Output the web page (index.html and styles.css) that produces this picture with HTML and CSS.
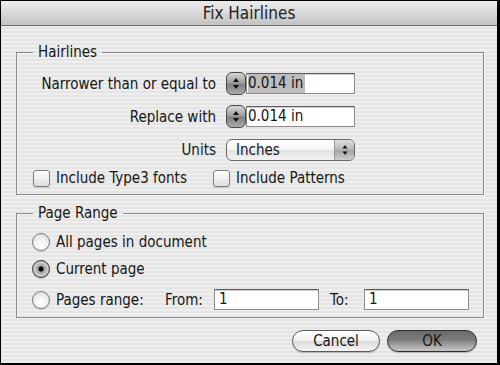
FILE: index.html
```html
<!DOCTYPE html>
<html lang="en">
<head>
<meta charset="UTF-8" />
<title>Fix Hairlines</title>
<link rel="stylesheet" href="styles.css">
</head>
<body>
    <div class="window">
        <div class="titlebar">Fix Hairlines</div>

        <div class="sheet">
            <fieldset class="group group-hairlines">
                <legend>Hairlines</legend>

                <div class="row">
                    <span class="row-label">Narrower than or equal to</span>
                    <span class="stepper">
                        <svg width="20" height="23" viewBox="0 0 20 23"><path d="M7 10 L10 6 L13 10 Z M7 13 L10 17 L13 13 Z" fill="#111"/></svg>
                    </span>
                    <span class="field field-num"><span class="selection">0.014 in</span></span>
                </div>

                <div class="row row-replace">
                    <span class="row-label">Replace with</span>
                    <span class="stepper">
                        <svg width="20" height="23" viewBox="0 0 20 23"><path d="M7 10 L10 6 L13 10 Z M7 13 L10 17 L13 13 Z" fill="#111"/></svg>
                    </span>
                    <span class="field field-num">0.014 in</span>
                </div>

                <div class="row row-units">
                    <span class="row-label">Units</span>
                    <span class="popup">
                        <span class="popup-text">Inches</span>
                        <span class="popup-arrows">
                            <svg width="20" height="20" viewBox="0 0 20 20"><path d="M7.5 8.5 L10 5 L12.5 8.5 Z M7.5 11.5 L10 15 L12.5 11.5 Z" fill="#111"/></svg>
                        </span>
                    </span>
                </div>

                <div class="checks">
                    <span class="check check-first"><span class="box"></span>Include Type3 fonts</span>
                    <span class="check"><span class="box"></span>Include Patterns</span>
                </div>
            </fieldset>

            <fieldset class="group group-range">
                <legend>Page Range</legend>

                <div class="radio-row"><span class="radio"></span>All pages in document</div>
                <div class="radio-row radio-row-2"><span class="radio radio-on"></span>Current page</div>
                <div class="radio-row radio-row-3">
                    <span class="radio"></span>
                    <span class="range-label">Pages range:</span>
                    <span class="from-label">From:</span>
                    <span class="field field-page">1</span>
                    <span class="to-label">To:</span>
                    <span class="field field-page">1</span>
                </div>
            </fieldset>

            <div class="buttons">
                <span class="button">Cancel</span>
                <span class="button button-default">OK</span>
            </div>
        </div>
    </div>
</body>
</html>
```

FILE: styles.css
```css
* {
    margin:0px;
    padding:0px;
    box-sizing:border-box;
}

body {
    font-family:'DejaVu Sans Condensed', 'Liberation Sans', Arial, sans-serif;
    font-size:15px;
    line-height:18px;
    color:#151515;
    background-color:#000;
}

.window {
    width:500px;
    height:365px;
    border-style:solid;
    border-color:#000;
    border-width:1px 3px 2px 1px;
    background:repeating-linear-gradient(to bottom, #eeeeee 0px, #eeeeee 2px, #e5e5e5 2px, #e5e5e5 4px);
    overflow:hidden;
}

.titlebar {
    height:25px;
    border-bottom:1px solid #6e6e6e;
    font-size:17px;
    line-height:24px;
    text-align:center;
    color:#222;
    background:linear-gradient(to bottom, #ececec 0%, #d9d9d9 50%, #c2c2c2 100%);
}

.sheet {
    padding:17px 13px 0px 15px;
}

/* group boxes */
.group {
    border:1px solid #8a8a8a;
    box-shadow:inset 1px 1px 0px #f6f6f6, 1px 1px 0px #f6f6f6;
}

.group legend {
    margin-left:16px;
    padding:0px 5px;
    line-height:18px;
}

.group-hairlines {
    padding:11px 0px 7px 0px;
}

.group-range {
    margin-top:9px;
    padding:11px 0px 7px 0px;
}

/* label + control rows */
.row {
    display:flex;
    align-items:center;
    height:23px;
}

.row-replace {
    margin-top:10px;
}

.row-units {
    margin-top:11px;
    height:22px;
}

.row-label {
    width:199px;
    margin-right:10px;
    text-align:right;
}

.stepper {
    display:block;
    width:20px;
    height:23px;
    border:1px solid #4a4a4a;
    border-radius:6px;
    background:linear-gradient(to bottom, #d6d6d6 0%, #a0a0a0 45%, #808080 55%, #ababab 100%);
}

.stepper svg {
    display:block;
    margin:-1px 0px 0px -1px;
}

.field {
    display:block;
    height:21px;
    padding:0px 3px;
    border:1px solid #8c8c8c;
    border-top-color:#5c5c5c;
    line-height:19px;
    background-color:#fff;
    box-shadow:inset 0px 1px 0px #cfcfcf;
}

.field-num {
    width:109px;
    padding-left:1px;
}

.selection {
    display:inline-block;
    padding-right:2px;
    background-color:#bdbdbd;
}

.popup {
    display:flex;
    width:129px;
    height:22px;
    border:1px solid #6a6a6a;
    border-radius:6px;
    background:linear-gradient(to bottom, #ffffff 0%, #f4f4f4 50%, #e2e2e2 51%, #f2f2f2 100%);
    overflow:hidden;
}

.popup-text {
    flex:1;
    padding-left:9px;
    line-height:20px;
}

.popup-arrows {
    display:block;
    width:20px;
    border-left:1px solid #9a9a9a;
    background:linear-gradient(to bottom, #e0e0e0 0%, #b4b4b4 50%, #a2a2a2 51%, #cfcfcf 100%);
}

.popup-arrows svg {
    display:block;
}

/* checkboxes */
.checks {
    display:flex;
    align-items:center;
    height:18px;
    margin-top:8px;
    padding-left:16px;
}

.check {
    display:flex;
    align-items:center;
}

.check-first {
    width:180px;
}

.box {
    display:block;
    width:17px;
    height:17px;
    margin-right:6px;
    border:1px solid #7e7e7e;
    border-radius:3px;
    background:linear-gradient(to bottom, #ffffff 0%, #f0f0f0 50%, #dcdcdc 100%);
    box-shadow:0px 1px 1px rgba(0, 0, 0, 0.15);
}

/* radios */
.radio-row {
    display:flex;
    align-items:center;
    height:18px;
    padding-left:15px;
}

.radio-row-2 {
    margin-top:9px;
}

.radio-row-3 {
    margin-top:11px;
    height:21px;
}

.radio {
    display:block;
    flex:none;
    width:18px;
    height:18px;
    margin-right:6px;
    border:1px solid #7a7a7a;
    border-radius:50%;
    background:radial-gradient(circle at 50% 70%, #ffffff 0%, #f2f2f2 45%, #d2d2d2 100%);
    box-shadow:0px 1px 1px rgba(0, 0, 0, 0.15);
}

.radio-on {
    border-color:#3c3c3c;
    background:radial-gradient(circle at 50% 50%, #000 0px, #000 2px, #9a9a9a 3px, #d0d0d0 60%, #5e5e5e 100%);
}

.range-label {
    width:109px;
}

.from-label {
    width:49px;
}

.to-label {
    width:34px;
    margin-left:11px;
}

.field-page {
    width:105px;
    padding-left:4px;
}

/* buttons */
.buttons {
    display:flex;
    justify-content:flex-end;
    gap:7px;
    margin-top:12px;
    padding-right:7px;
}

.button {
    display:block;
    width:88px;
    height:22px;
    border:1px solid #5a5a5a;
    border-radius:11px;
    line-height:20px;
    text-align:center;
    background:linear-gradient(to bottom, #ffffff 0%, #f3f3f3 45%, #dcdcdc 55%, #f6f6f6 100%);
    box-shadow:0px 1px 1px rgba(0, 0, 0, 0.2);
}

.button-default {
    width:90px;
    border-color:#2e2e2e;
    background:linear-gradient(to bottom, #6a6a6a 0%, #7c7c7c 45%, #8e8e8e 55%, #c6c6c6 100%);
}
```
